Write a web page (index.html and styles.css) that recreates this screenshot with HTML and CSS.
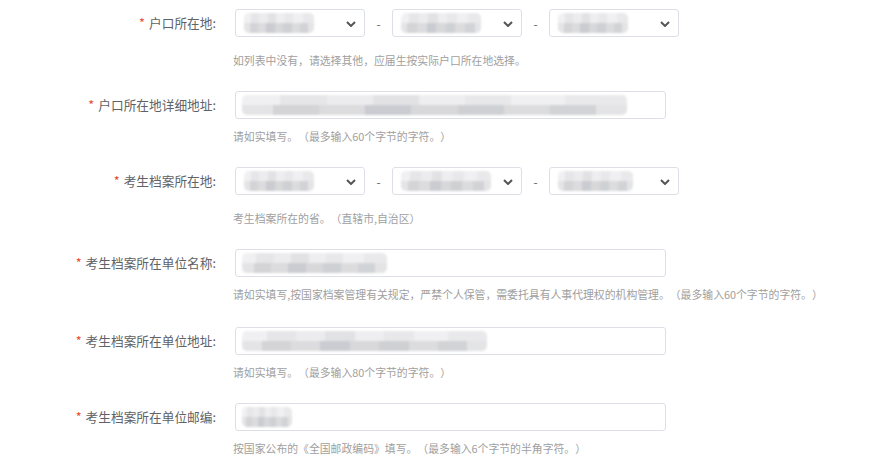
FILE: index.html
```html
<!DOCTYPE html>
<html lang="zh-CN">
<head>
    <meta charset="UTF-8">
    <meta name="viewport" content="width=device-width, initial-scale=1.0">
    <title>考生户籍及档案信息</title>
    <link rel="stylesheet" href="styles.css">
</head>
<body>
    <div class="form">

        <div class="row row-select">
            <div class="label"><span class="req">*</span>户口所在地:</div>
            <div class="field">
                <div class="selects">
                    <div class="select"><span class="mosaic w70"></span><svg class="arrow" viewBox="0 0 10 6"><polyline points="1,1 5,5 9,1"/></svg></div>
                    <span class="dash">-</span>
                    <div class="select"><span class="mosaic w80"></span><svg class="arrow" viewBox="0 0 10 6"><polyline points="1,1 5,5 9,1"/></svg></div>
                    <span class="dash">-</span>
                    <div class="select"><span class="mosaic w70"></span><svg class="arrow" viewBox="0 0 10 6"><polyline points="1,1 5,5 9,1"/></svg></div>
                </div>
                <p class="tip">如列表中没有，请选择其他，应届生按实际户口所在地选择。</p>
            </div>
        </div>

        <div class="row">
            <div class="label"><span class="req">*</span>户口所在地详细地址:</div>
            <div class="field">
                <div class="input"><span class="mosaic w385"></span></div>
                <p class="tip">请如实填写。（最多输入60个字节的字符。）</p>
            </div>
        </div>

        <div class="row row-select">
            <div class="label"><span class="req">*</span>考生档案所在地:</div>
            <div class="field">
                <div class="selects">
                    <div class="select"><span class="mosaic w70"></span><svg class="arrow" viewBox="0 0 10 6"><polyline points="1,1 5,5 9,1"/></svg></div>
                    <span class="dash">-</span>
                    <div class="select"><span class="mosaic w90"></span><svg class="arrow" viewBox="0 0 10 6"><polyline points="1,1 5,5 9,1"/></svg></div>
                    <span class="dash">-</span>
                    <div class="select"><span class="mosaic w75"></span><svg class="arrow" viewBox="0 0 10 6"><polyline points="1,1 5,5 9,1"/></svg></div>
                </div>
                <p class="tip">考生档案所在的省。（直辖市,自治区）</p>
            </div>
        </div>

        <div class="row row-long">
            <div class="label"><span class="req">*</span>考生档案所在单位名称:</div>
            <div class="field">
                <div class="input"><span class="mosaic w145"></span></div>
                <p class="tip">请如实填写,按国家档案管理有关规定，严禁个人保管，需委托具有人事代理权的机构管理。（最多输入60个字节的字符。）</p>
            </div>
        </div>

        <div class="row">
            <div class="label"><span class="req">*</span>考生档案所在单位地址:</div>
            <div class="field">
                <div class="input"><span class="mosaic w245"></span></div>
                <p class="tip">请如实填写。（最多输入80个字节的字符。）</p>
            </div>
        </div>

        <div class="row">
            <div class="label"><span class="req">*</span>考生档案所在单位邮编:</div>
            <div class="field">
                <div class="input"><span class="mosaic w50"></span></div>
                <p class="tip">按国家公布的《全国邮政编码》填写。（最多输入6个字节的半角字符。）</p>
            </div>
        </div>

    </div>
</body>
</html>
```

FILE: styles.css
```css
body {
    margin: 0;
    background-color: #fff;
    font-family: "Microsoft YaHei", "Noto Sans CJK SC", "Noto Sans", sans-serif;
}

.form {
    padding-top: 9px;
}

.row {
    display: flex;
    margin-bottom: 22px;
}

.row-long {
    margin-bottom: 24px;
}

.label {
    width: 216px;
    height: 28px;
    line-height: 28px;
    text-align: right;
    font-size: 12.7px;
    color: #606266;
    flex-shrink: 0;
}

.req {
    color: #e6441f;
    margin-right: 4px;
}

.field {
    margin-left: 19px;
}

.selects {
    display: flex;
    align-items: center;
}

.select,
.input {
    box-sizing: border-box;
    height: 28px;
    border: 1px solid #dcdfe6;
    border-radius: 3px;
    background-color: #fff;
    display: flex;
    align-items: center;
    padding-left: 8px;
    overflow: hidden;
}

.select {
    width: 130px;
    position: relative;
}

.input {
    width: 431px;
    padding-left: 6px;
}

.arrow {
    position: absolute;
    right: 8px;
    top: 11px;
    width: 10px;
    height: 6px;
    fill: none;
    stroke: #555;
    stroke-width: 2;
}

.dash {
    width: 27px;
    text-align: center;
    font-size: 12px;
    color: #666;
}

.tip {
    margin: 8px 0 0;
    line-height: 18px;
    font-size: 10.85px;
    color: #a0a0a0;
    margin-left: -2px;
    white-space: nowrap;
    text-spacing-trim: space-all;
}

.row-select .tip {
    margin-top: 14px;
}

/* blurred placeholders for private values */
.mosaic {
    display: block;
    height: 20px;
    filter: blur(1px);
    border-radius: 5px;
    background:
        linear-gradient(90deg, #f0f0f2 0 10%, #e6e6e8 10% 22%, #ececee 22% 34%, #e2e2e5 34% 46%, #eeeef0 46% 58%, #e8e8ea 58% 70%, #f0f0f2 70% 84%, #e9e9eb 84% 100%) top / 100% 50% no-repeat,
        linear-gradient(90deg, #e4e4e6 0 8%, #d4d4d7 8% 20%, #dcdcde 20% 32%, #cbccd1 32% 44%, #d8d8db 44% 56%, #cfd0d4 56% 68%, #dcdcdf 68% 80%, #d2d3d7 80% 92%, #e4e4e6 92% 100%) bottom / 100% 50% no-repeat;
}

.w50 { width: 50px; }
.w70 { width: 70px; }
.w75 { width: 75px; }
.w80 { width: 80px; }
.w90 { width: 90px; }
.w145 { width: 145px; }
.w245 { width: 245px; }
.w385 { width: 385px; }
```
